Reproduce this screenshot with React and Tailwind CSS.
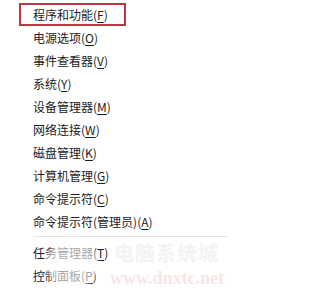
import React from 'react';

const items = [
  { label: '程序和功能', key: 'F', active: true },
  { label: '电源选项', key: 'O' },
  { label: '事件查看器', key: 'V' },
  { label: '系统', key: 'Y' },
  { label: '设备管理器', key: 'M' },
  { label: '网络连接', key: 'W' },
  { label: '磁盘管理', key: 'K' },
  { label: '计算机管理', key: 'G' },
  { label: '命令提示符', key: 'C' },
  { label: '命令提示符(管理员)', key: 'A' },
];

const tail = [
  { label: '任务管理器', key: 'T' },
  { label: '控制面板', key: 'P' },
];

const Row = ({ item }) => (
  <div
    className={
      item.active
        ? 'h-[23px] w-[107px] flex items-center pl-[12px] border-2 border-[#b53a40]'
        : 'h-[23px] flex items-center pl-[14px]'
    }
  >
    <span className="text-[12px] leading-none text-[#1c1c1c] whitespace-nowrap">
      {item.label}(<span className="underline underline-offset-2">{item.key}</span>)
    </span>
  </div>
);

export default function App() {
  return (
    <div
      className="relative w-[242px] h-[296px] bg-white overflow-hidden pl-[19px] pt-[3px]"
      style={{ fontFamily: '"Noto Sans CJK SC", "Noto Sans", sans-serif' }}
    >
      {items.map((item) => (
        <Row key={item.label} item={item} />
      ))}

      <div className="mt-[3px] mb-[4px] ml-[14px] w-[195px] h-px bg-[#e2e2e2]" />

      {tail.map((item) => (
        <Row key={item.label} item={item} />
      ))}

      {/* watermark */}
      <div className="absolute left-[46px] top-[238px] w-[52px] h-[52px] rounded-full bg-white/60 blur-[2px]" />
      <div className="absolute left-[114px] top-[243px] text-[20px] leading-none font-bold tracking-[1px] text-[#f3f3f3] whitespace-nowrap">
        电脑系统城
      </div>
      <div
        className="absolute left-[110px] top-[269px] text-[18px] leading-none font-bold text-[#f7e6e6] whitespace-nowrap"
        style={{ fontFamily: '"Liberation Serif", serif' }}
      >
        www.dnxtc.net
      </div>
    </div>
  );
}
